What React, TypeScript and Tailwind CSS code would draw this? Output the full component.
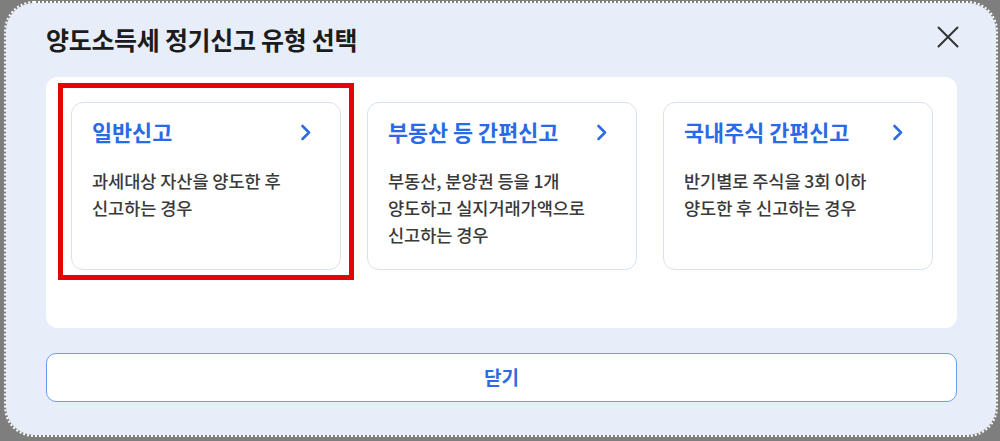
const cards = [
  { title: "일반신고", lines: ["과세대상 자산을 양도한 후", "신고하는 경우"] },
  {
    title: "부동산 등 간편신고",
    lines: ["부동산, 분양권 등을 1개", "양도하고 실지거래가액으로", "신고하는 경우"],
  },
  { title: "국내주식 간편신고", lines: ["반기별로 주식을 3회 이하", "양도한 후 신고하는 경우"] },
];

function Chevron() {
  return (
    <svg width="12" height="17" viewBox="0 0 12 17" fill="none">
      <path d="M2.5 2 L9 8.5 L2.5 15" stroke="#2f6be5" strokeWidth="2.6" strokeLinecap="round" strokeLinejoin="round" />
    </svg>
  );
}

function CloseIcon() {
  return (
    <svg width="22" height="22" viewBox="0 0 22 22" fill="none">
      <path d="M1.5 1.5 L20.5 20.5 M20.5 1.5 L1.5 20.5" stroke="#333333" strokeWidth="2" strokeLinecap="round" />
    </svg>
  );
}

export default function App() {
  return (
    <div
      className="w-full h-[441px] bg-[#7e7e7e] pt-px overflow-hidden"
      style={{ fontFamily: '"Noto Sans CJK KR", "Noto Sans", sans-serif' }}
    >
      <div className="ml-[4px] mr-[2px] h-[436px] rounded-[30px] border-2 border-dotted border-white bg-[#e8eef9] bg-clip-padding pl-[40px] pr-[39px] pt-[20px]">
        <div className="flex items-center justify-between h-[34px]">
          <h1 className="text-[25px] font-semibold text-[#1c1c1c] tracking-[-0.3px]">
            양도소득세 정기신고 유형 선택
          </h1>
          <button className="-mr-[2px] -mt-[6px]">
            <CloseIcon />
          </button>
        </div>

        <div className="relative mt-[20px] h-[251px] rounded-[12px] bg-white pt-[25px] pl-[25px]">
          <div className="grid grid-cols-[270px_270px_270px] gap-[26px]">
            {cards.map((c) => (
              <div
                key={c.title}
                className="h-[168px] rounded-[12px] border border-[#d6e2f6] bg-white pl-[20px] pr-[28px] pt-[15px]"
              >
                <div className="flex items-center justify-between h-[28px]">
                  <span className="text-[21.8px] font-bold text-[#2a6ae6] leading-[28px]">{c.title}</span>
                  <Chevron />
                </div>
                <div className="mt-[21px] text-[17.6px] leading-[27px] font-medium text-[#3a3a3a] tracking-[-0.1px]">
                  {c.lines.map((l) => (
                    <div key={l}>{l}</div>
                  ))}
                </div>
              </div>
            ))}
          </div>
          <div className="absolute left-[12px] top-[6px] w-[296px] h-[197px] border-[5px] border-[#e10600] pointer-events-none" />
        </div>

        <button className="mt-[25px] w-full h-[49px] rounded-[10px] border-[1.5px] border-[#6e9cf1] bg-white text-[19px] font-semibold text-[#2d6be4]">
          닫기
        </button>
      </div>
    </div>
  );
}
